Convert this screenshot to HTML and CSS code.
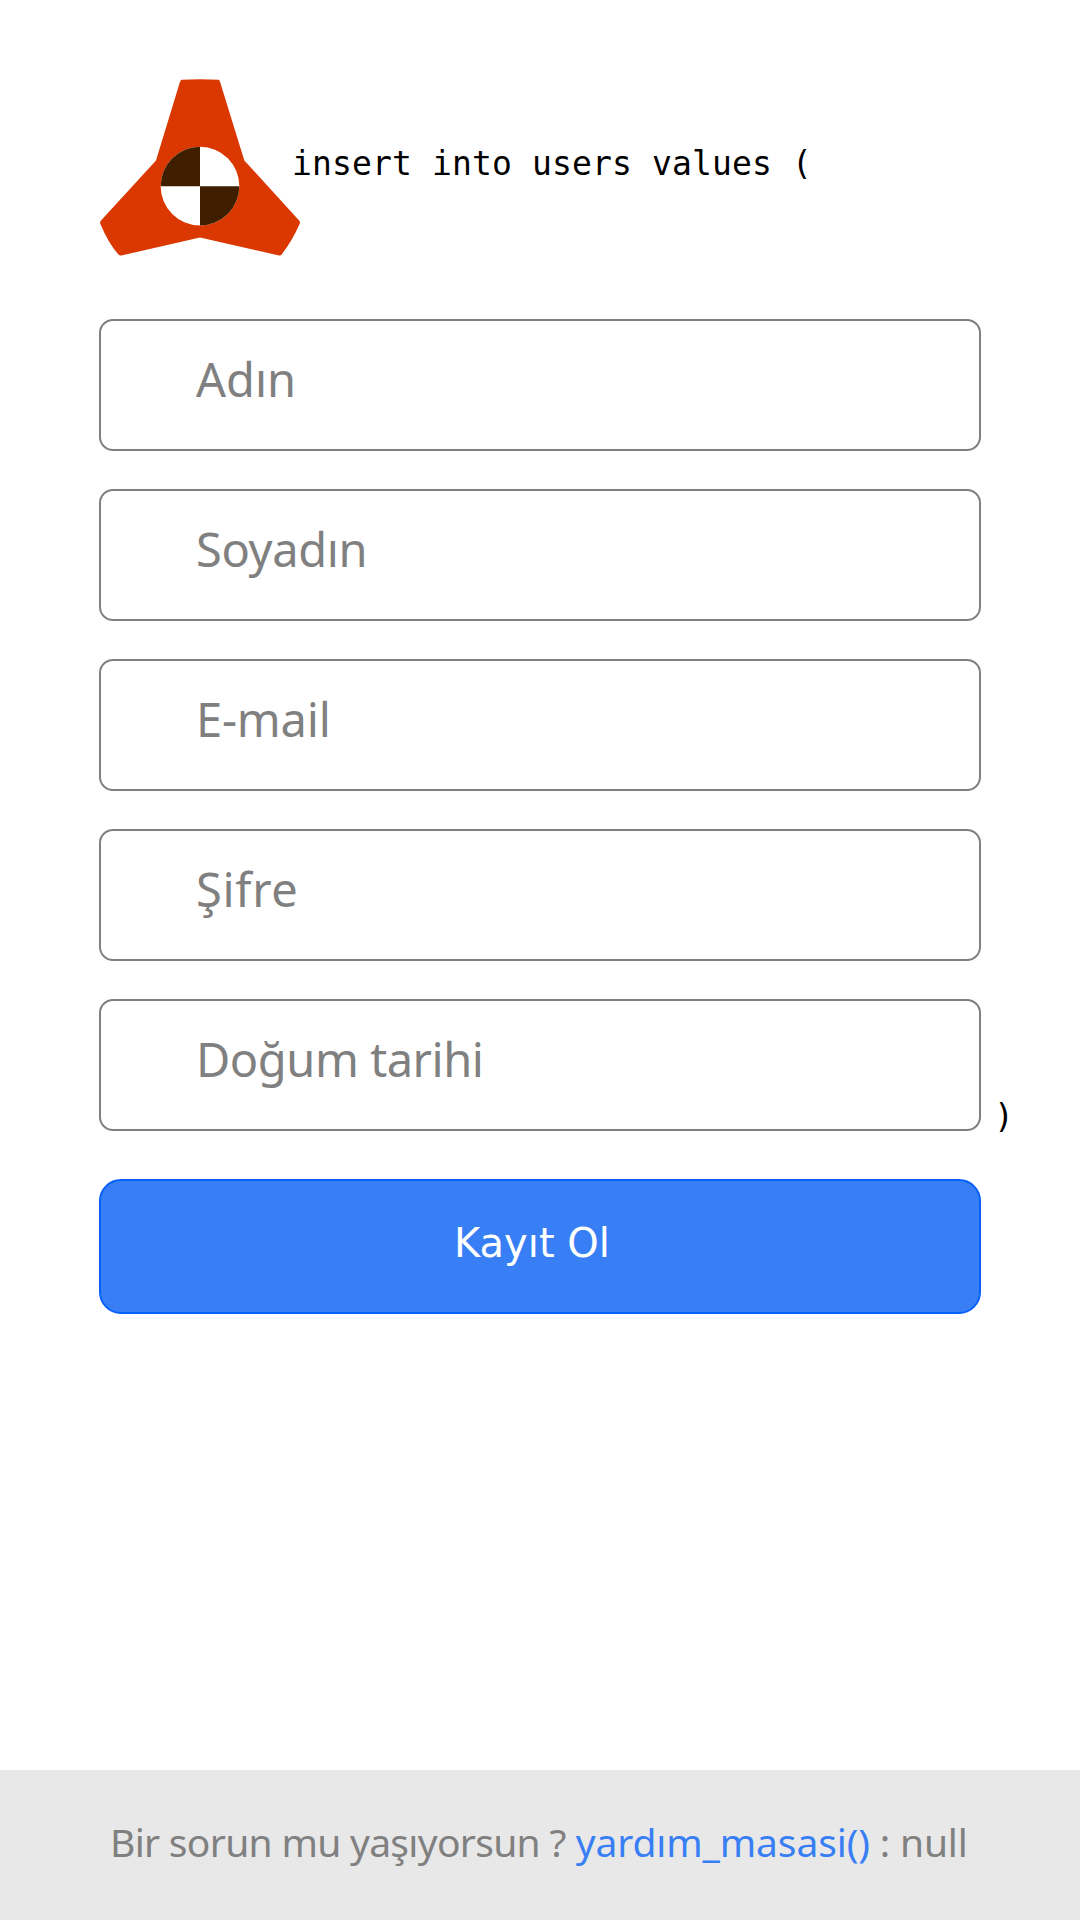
FILE: index.html
```html
<!DOCTYPE html>
<html lang="tr">
<head>
<meta charset="utf-8">
<title>Kayıt Ol</title>
<link rel="stylesheet" href="styles.css">
</head>
<body>
<main class="page">
  <header class="header">
    <svg class="logo" viewBox="30 27 600 530" aria-hidden="true">
      <path fill="#db3700" d="M275 29Q330 26 386 29Q389 31 390 35L463 271L628 452Q631 456 629 461Q608 510 575 553Q572 557 567 556L330 502L94 556Q89 557 86 554Q55 520 31 461Q29 456 33 451L198 271L270 35Q272 30 275 29Z"/>
      <circle cx="330" cy="348" r="118" fill="#fff"/>
      <path fill="#3f1f00" d="M330 348V230A118 118 0 0 0 212 348ZM330 348V466A118 118 0 0 0 448 348Z"/>
    </svg>
    <h1 class="code title">insert into users values (</h1>
  </header>
  <form class="form">
    <div class="field"><span class="first-name">Adın</span></div>
    <div class="field"><span class="last-name">Soyadın</span></div>
    <div class="field"><span class="email">E-mail</span></div>
    <div class="field"><span class="password">Şifre</span></div>
    <div class="last-row">
      <div class="field"><span class="birthday">Doğum tarihi</span></div>
      <span class="code close">)</span>
    </div>
    <button class="submit" type="button">Kayıt Ol</button>
  </form>
  <footer class="footer">
    <span class="question">Bir sorun mu yaşıyorsun ?</span>
    <a class="help">yardım_masasi()</a>
    <span class="null">: null</span>
  </footer>
</main>
</body>
</html>
```
FILE: styles.css
```css
* { box-sizing: border-box; }
body {
  margin: 0;
  background: #fff;
  font-family: "Noto Sans", sans-serif;
}
.page {
  display: flex;
  flex-direction: column;
  width: 1080px;
  height: 1920px;
}
.header {
  display: flex;
  align-items: flex-start;
  height: 319px;
  padding: 79px 0 0 100px;
}
.logo {
  flex: none;
  width: 200px;
  height: 177px;
}
.code {
  margin: 0;
  font: 400 33px/40px "DejaVu Sans Mono", monospace;
  letter-spacing: 0.13px;
  color: #000;
  white-space: pre;
}
.title {
  margin: 65px 0 0 -8px;
}
.form {
  display: flex;
  flex-direction: column;
  gap: 38px;
  padding-left: 99px;
}
.field {
  display: flex;
  flex: none;
  align-items: center;
  width: 882px;
  height: 132px;
  padding: 0 0 12px 95px;
  border: 2px solid #808080;
  border-radius: 14px;
  font-size: 47px;
  line-height: 64px;
  color: #808080;
  white-space: pre;
}
.last-name { letter-spacing: -0.35px; }
.email { letter-spacing: -0.2px; }
.password { letter-spacing: 0.7px; }
.birthday { letter-spacing: -0.45px; }
.last-row {
  display: flex;
  align-items: flex-end;
}
.close {
  margin: 0 0 -6px 13px;
}
.submit {
  width: 882px;
  height: 135px;
  margin-top: 10px;
  padding: 0 16px 7px 0;
  border: 2px solid #0560ff;
  border-radius: 22px;
  background: #387ff5;
  font: 400 40px/48px "DejaVu Sans", sans-serif;
  color: #fff;
}
.footer {
  display: flex;
  align-items: center;
  height: 150px;
  margin-top: auto;
  padding: 0 0 6px 110px;
  background: #e8e8e8;
  font-size: 39px;
  line-height: 54px;
  color: #808080;
  white-space: pre;
}
.question {
  letter-spacing: -0.7px;
}
.help {
  margin-left: 10px;
  color: #387ff5;
  letter-spacing: -0.12px;
}
.null {
  margin-left: 10px;
  letter-spacing: -0.2px;
}
```
